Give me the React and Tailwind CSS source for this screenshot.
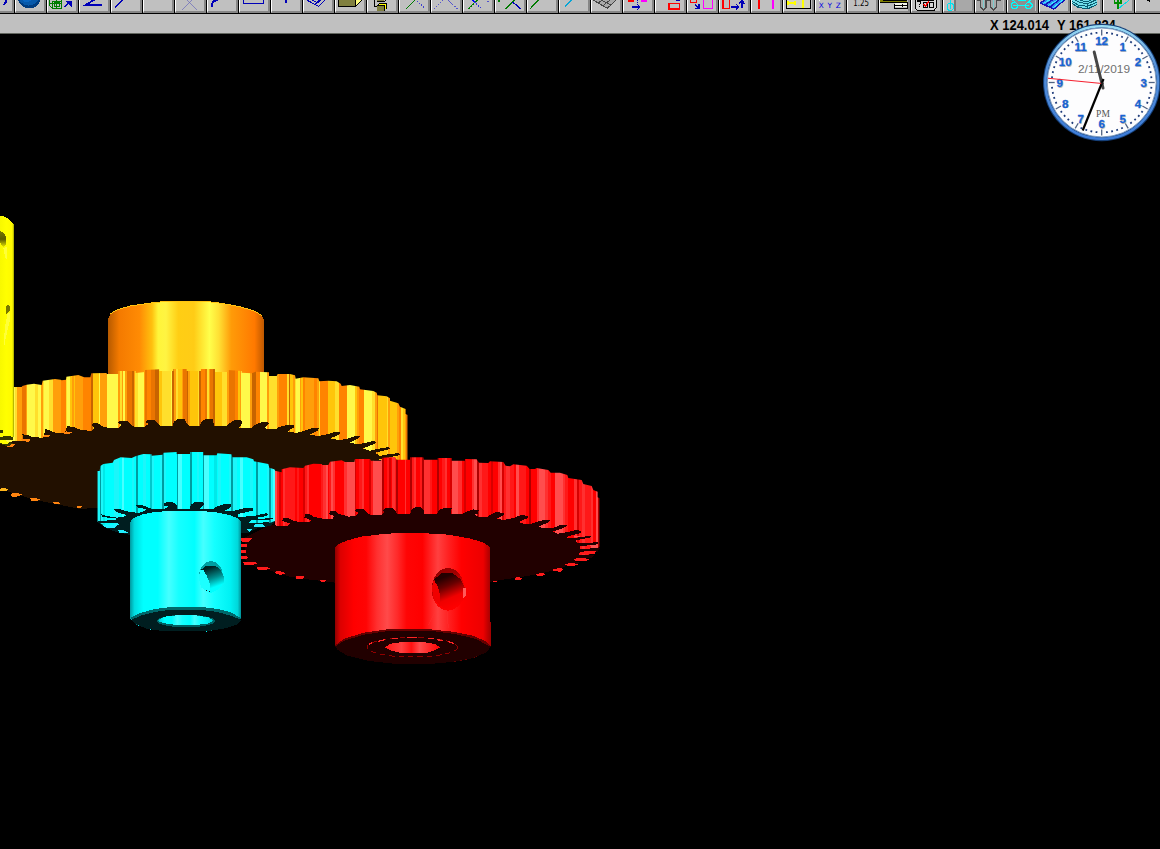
import React from 'react';

const NAVY = '#0000b8';
const p = (d, stroke = NAVY, w = 4, dash) => (
  <path d={d} fill="none" stroke={stroke} strokeWidth={w} strokeDasharray={dash} />
);
const r = (x, y, w, h, fill) => <rect x={x} y={y} width={w} height={h} fill={fill} />;

/* Every tool icon lives on a 96 x 39 grid: three units to a pixel. */
const icons = [
  <>
    <circle cx="46" cy="-10" r="35" fill="#003d80" />
    <circle cx="44" cy="-14" r="31" fill="#0759aa" />
    <circle cx="38" cy="-12" r="18" fill="#0a67c2" />
  </>,
  <>
    {p('M11 -3 V17 L19 25 H46 V-3 M19 25 V3 H46 M25 20 V8 H40 V20 Z M11 10 H46 M32 0 V25', '#007c00', 3)}
    {p('M56 21 L72 5')}
    <path d="M58 4 H77 V21 L70 15 Z" fill={NAVY} />
  </>,
  p('M72 14 H24 L54 -4', NAVY, 5),
  p('M15 23 L42 -4', NAVY, 5),
  null,
  p('M24 30 L66 -12 M26 -12 L68 30', '#6464bc', 2),
  p('M17 20 V11 L23 4 L36 0', NAVY, 5),
  p('M17 -4 V10 H76 V-4', NAVY, 4),
  p('M48 -3 V9', NAVY, 4),
  p('M14 0 L50 19 L72 -2 M28 -2 L44 7 L54 0 M40 12 L56 2', NAVY, 3),
  <>
    {r(12, -3, 53, 22, '#808040')}
    <path d="M65 19 V-3 H84 V2 Z" fill="#ffff80" />
    {p('M12 -3 V19 H65 L83 2 V-3 M65 19 V-3', '#000', 3)}
  </>,
  <>
    {p('M25 -3 V20 H34', '#000', 3)}
    {r(34, -3, 21, 8, '#808040')}
    {r(34, 14, 21, 18, '#808040')}
    {p('M34 5 H55 L60 0 M34 17 H54 V32 M34 17 L40 10 H61 V28', '#000', 3)}
    {p('M40 13 H57 V28', '#ffff00', 3)}
  </>,
  <>{p('M24 27 L54 -3', '#007c00')}{p('M57 3 L81 25', '#4040d0', 3, '5 3')}</>,
  <>{p('M12 27 L40 0', '#5656cc', 3, '5 3')}{p('M55 2 L83 27', '#5656cc', 3, '5 3')}</>,
  <>
    {p('M18 27 L48 -1', '#007c00', 4, '7 2')}
    {p('M30 0 L60 27', '#3434d8', 3, '5 3')}
    {p('M30 -2 L40 7', '#00f', 4)}
    {r(74, 2, 6, 4, '#5050d0')}
  </>,
  <>{p('M34 27 L64 -3', '#007c00')}{p('M56 6 L80 26')}{r(12, 0, 5, 5, '#007c00')}</>,
  p('M12 27 L40 -2', '#007c00'),
  p('M20 20 L44 -2', '#08a5d5'),
  <>
    <path d="M9 -1 L52 25 L78 -1 Z" fill="#a9a9a9" />
    {p('M9 0 L52 25 L78 0 M24 10 L36 0 M38 18 L60 0 M30 -2 L63 15', '#454545', 3)}
  </>,
  <>{r(18, 0, 18, 6, '#f00')}{r(57, 0, 19, 6, '#f0f')}{p('M46 0 V13', NAVY, 3, '3 3')}{p('M30 21 H54 M46 13 L54 21 L46 29')}</>,
  <>{p('M44 10 H76 V27 H44 Z', '#f00', 5)}{p('M68 0 L77 3', NAVY, 4)}</>,
  <>{p('M14 -3 V7 H31 V-3', '#f00')}{p('M27 13 L39 24 M39 13 V25 H28', NAVY, 4)}{p('M52 -3 V25 H79 V-3', '#f0f')}</>,
  <>{p('M15 -3 V25 H34 V-3', '#f00')}{p('M39 21 H62 M55 13 L63 21 L55 28 M72 24 V3 M63 12 L72 2 L80 12')}</>,
  <>{p('M27 -2 V27', '#f00', 5)}{p('M69 -2 V27', '#f0f', 5)}</>,
  <>
    {r(14, -2, 72, 26, '#d2d2c4')}
    {p('M14 -2 V24 H85 V-2', '#000', 3)}
    {p('M17 4 V15 M17 9 H39 M39 4 V15 M63 -2 V23', '#ff0', 5)}
  </>,
  <>
    <text x="14" y="24" fill="#0000e0" fontSize="22" textLength="66" className="font-['DejaVu_Sans']">X Y Z</text>
    {r(16, 0, 3, 3, '#fff')}
  </>,
  <text x="22" y="19" fill="#000" fontSize="26" textLength="47" lengthAdjust="spacingAndGlyphs" className="font-['DejaVu_Sans']">1.25</text>,
  <>
    {r(6, 0, 82, 6, '#808000')}
    {p('M6 6 H87 V24 H50 V11 M14 0 H86', '#000', 3)}
    {r(52, 9, 34, 12, '#f4f4e8')}
    {p('M52 15 H86 M74 12 V21', '#000', 3)}
  </>,
  <>
    {r(16, -3, 62, 32, '#d4d4d4')}
    {p('M16 -3 V24 L21 30 H73 L78 24 V-3', '#000', 3)}
    {p('M22 5 H31 V11 L27 15 M27 19 V22 M39 7 H52 V21 H39 Z M57 7 H70 V21 H57 Z M22 1 H72', '#000', 3)}
    {p('M41 12 L46 18 L57 4', '#f00', 4)}
  </>,
  <>{r(38, 0, 52, 33, '#a8a8a8')}{r(35, 0, 6, 33, '#777')}{p('M25 -3 V26 M16 14 L21 10 H29 L34 14 V25 L29 31 H20 L16 26 Z', '#00e5f2', 3)}</>,
  <>
    {r(4, 0, 84, 32, '#aaa')}
    {p('M8 0 H20 V22 L28 30 L36 22 V0 H50 V22 L59 30 L68 22 V0 H82', '#4b4b4b', 4)}
    {p('M28 0 V24 M59 0 V24', '#65dce0', 2)}
  </>,
  <>
    {r(4, 0, 84, 32, '#8e8e8e')}
    {p('M15 14 L21 8 H29 L35 14 V20 L29 26 H21 L15 20 Z M58 14 L64 8 H72 L78 14 V20 L72 26 H64 L58 20 Z M22 17 H70 M28 7 L16 -3 M64 8 L78 -3 M36 1 H60', '#0ff', 3)}
  </>,
  <>
    <path d="M6 9 L26 -3 H82 L48 28 Z" fill="#3487ee" />
    {p('M6 9 L48 27 L82 -2 M8 8 L26 -3 M22 14 L48 -3 M36 22 L65 -3', '#1414b8', 4)}
    {p('M16 10 L38 -2 M30 17 L58 0 M46 23 L74 0', '#32e9ff', 3)}
  </>,
  <>
    <path d="M5 -2 V9 L24 22 L52 27 L80 13 V-2 Z" fill="#72dfea" />
    {p('M5 3 L24 15 L52 19 L80 7 M5 9 L24 22 L52 27 L80 14 M12 -2 L30 8 L54 11 L77 0 M24 -2 L38 3 L58 3 L68 -2 M24 15 V22 M52 12 V27', '#0b5c70', 3)}
  </>,
  <>{p('M50 25 L83 -1', '#00dde7', 3)}{p('M37 -2 V8 H57 V-2 M48 -2 V27', '#008e00', 5)}</>,
  p('M38 0 H46 V5', '#000', 3),
];

function ToolButton({ children }) {
  return (
    <div className="flex h-[13px] w-8 shrink-0 overflow-hidden border-l border-black bg-[#c0c0c0]">
      <div className="h-full w-full overflow-hidden border-b-2 border-l border-r-2 border-b-[#868686] border-l-white border-r-[#868686]">
        <svg viewBox="6 0 84 33" width="28" height="11" className="block max-w-none" shapeRendering="crispEdges">{children}</svg>
      </div>
    </div>
  );
}

const gold = { f: '#c86400', o: '#ea7500', a: '#ff8400', b: '#ff9f0a', c: '#ffc50a', d: '#ffdf2c', e: '#fff94a' };
const reds = { f: '#b00000', o: '#d80000', a: '#ff0000', b: '#ff1818', c: '#ff3030', e: '#ff4d4d' };
const cyans = { f: '#009ca0', o: '#00c8cc', a: '#00ffff', b: '#00e9e9', c: '#1cf6fa', e: '#48ffff' };

function Stripes({ data, palette, bottom }) {
  const items = data.trim().split(/\s+/).map((s) => [parseInt(s, 10), s.slice(-1)]);
  return items.slice(0, -1).map(([x, k], i) => (
    <rect key={x} x={x} y="0" width={items[i + 1][0] - x} height={bottom} fill={palette[k]} />
  ));
}

const goldStripes = `-270e -225d -220b -204o -192b -189e -165d -156e -147b -141d -138e -122d -112b -99b -87a -72d -68e -60c -55b -48c -45b -22a 3f 8c 28e 30b 50e 84b 90d 96b 100e 106b 112o 125f 131b 136d 145e 162b 166o 172a 184o 194f 208c 215d 242e 247f 251b 258d 263c 276b 280o 291f 295b 301c 323d 328f 333a 345o 352d 358b 361o 368f 375c 397d 411b 417o 423o 434a 443c 449b 454e 481b 486f 497a 510e 531b 537d 560b 568a 590d 596f 599c 608b 614d 618e 630b 634c 638a 645b 672a 681b 686d 690a 715c 735d 748a 771e 795c 801b 808a 822e 846d 854b 860o 865c 890d 894b 900c 921b 928a 933d 939c 944b 948o 951a 954a`;
const redStripes = `120e 125b 132o 139a 145c 150b 181a 187b 193a 205o 210b 217c 221a 258b 263c 272e 278a 283b 288e 295c 300a 328c 337e 359o 364a 372b 382c 388a 402o 408b 413e 440f 447a 456b 461o 467a 472c 480b 484f 489a 510c 514a 526f 532b 538c 543a 554b 560f 567c 585b 590a 606f 611a 622b 629c 636a 646o 650e 670c 682a 688o 694a 710c 718e 725f 731c 741b 758a 768o 773a 789c 795e 801o 808b 812c 825b 836a 844e 852b 872a 883f 888a 905c 912e 930c 938b 949a 960e 983c 990b 999a 1017c 1025o 1032b 1041c 1049b 1068c 1075a 1082e 1089f 1095a`;
const cyanStripes = `52c 60f 64c 69b 74a 98a 103c 116a 126e 131a 155c 163a 169f 173a 190c 198a 211o 215c 223a 240c 247f 252c 258a 282a 291f 295e 306a 326a 330f 336a 350c 356a 369f 373e 388a 402b 412a 415c 422a 435a 448c 454f 459c 472a 480e 490a 509c 518a 528f 533c 540a 560c 567f 573c 579e 586a`;

function GoldGear() {
  return (
    <g transform="translate(90 290) scale(.333333)">
      <defs>
        <linearGradient id="goldHub">
          <stop offset="0" stopColor="#b85b00" /><stop offset=".07" stopColor="#f47a00" /><stop offset=".2" stopColor="#ff8b04" />
          <stop offset=".28" stopColor="#ffc00e" /><stop offset=".32" stopColor="#fff53a" /><stop offset=".37" stopColor="#fff442" />
          <stop offset=".45" stopColor="#ffce14" /><stop offset=".55" stopColor="#ffcc16" /><stop offset=".65" stopColor="#ffff4b" />
          <stop offset=".71" stopColor="#ffe034" /><stop offset=".79" stopColor="#ff9b08" /><stop offset=".94" stopColor="#ff7900" /><stop offset="1" stopColor="#bd5800" />
        </linearGradient>
        <clipPath id="goldClip">
          <path d="M-228 290 V291 H-205 L-203 288 L-190 284 L-168 281 L-145 285 L-142 272 L-105 267 L-88 269 L-85 271 L-72 269 L-71 260 L-35 255 L-17 262 H1 L4 250 L50 249 V252 H85 V243 H137 V249 L165 246 V240 L208 238 V243 H250 V237 H290 V243 H333 V237 H375 V246 H413 V240 L455 243 V248 L485 250 L497 245 L537 247 V258 H560 L563 252 H600 L615 256 L617 266 L640 262 L685 265 L688 274 L715 272 L740 274 L752 281 L755 288 L780 285 L808 290 L810 298 L850 303 L860 308 L862 316 L890 319 L900 325 V332 L925 340 L930 350 L947 357 V372 L953 375 V510 H850 V540 H-270 V290 Z" />
        </clipPath>
      </defs>
      <path d="M55 255 V85 L63 70 L80 60 L120 48 L190 38 L232 33 H342 L382 38 L445 49 L493 63 L515 76 L522 88 V255 Z" fill="url(#goldHub)" />
      <path d="M60 72 L80 60 L120 48 L190 38 L232 34 H342 L382 38 L445 49 L493 63 L515 76" fill="none" stroke="#ffc410" strokeWidth="3" />
      <g clipPath="url(#goldClip)"><Stripes data={goldStripes} palette={gold} bottom="550" /></g>
      <path
        fill="#221000"
        d="M-270 458 L-240 455 L-200 452 L-203 433 L-188 435 L-170 442 L-140 443 L-134 417 L-120 422 L-98 430 L-76 430 L-68 408 L-45 412 L-28 420 L-12 421 L4 423 L13 414 L5 406 L9 399 L28 401 L33 408 L60 415 L88 413 L96 405 L84 399 L88 393 H112 L125 405 L133 411 H162 L177 402 L168 397 L172 390 H193 L205 400 L212 408 H247 L252 395 L264 387 H283 L291 402 L299 408 H328 L335 394 L347 387 H368 L373 408 H408 L415 402 L432 391 H453 L457 398 L447 414 L485 415 L493 405 L513 397 L533 396 L537 402 L523 413 L535 418 H560 L567 411 L593 405 H611 L614 411 L592 424 L620 429 L643 422 L668 414 H687 L684 421 L660 434 L682 438 L705 435 L733 426 H752 L748 433 L722 445 L750 451 L775 445 L795 438 H810 L805 446 L779 458 L802 463 L824 459 L850 453 L860 457 L850 463 L818 475 L840 482 L868 476 L897 471 L900 477 L855 488 L870 498 L904 491 L928 490 L930 495 L890 504 L850 512 V600 H50 V655 H0 L-30 657 L-60 651 L-100 643 L-145 634 L-180 625 L-225 611 L-270 598 Z"
      />
      <g fill="#ff8410">
        <path d="M-270 596 L-255 594 L-245 600 L-255 604 H-270 Z" fill="#ffb51a" />
        <path d="M-237 613 L-230 609 L-214 610 L-201 614 L-221 620 H-235 Z" />
        <path d="M-180 624 H-163 L-149 628 L-159 633 H-175 Z" />
        <path d="M-114 636 L-93 637 L-89 642 H-107 Z" /><path d="M-39 648 L-24 649 L-29 655 H-38 Z" />
        <path d="M-239 462 L-223 463 L-233 470 H-248 Z" /><path d="M-202 446 L-177 449 L-185 456 L-210 450 Z" />
        <path d="M-136 434 L-118 437 L-128 441 H-142 Z" /><path d="M-72 424 L-53 427 L-64 432 H-80 Z" />
      </g>
    </g>
  );
}

function YellowShaft() {
  return (
    <g transform="translate(0 205) scale(.333333)">
      <defs>
        <linearGradient id="shaft"><stop offset="0" stopColor="#f8f800" /><stop offset=".45" stopColor="#ffff00" /><stop offset=".86" stopColor="#fff900" /><stop offset=".94" stopColor="#d8d800" /><stop offset="1" stopColor="#8a8a00" /></linearGradient>
        <linearGradient id="shaftHole" x2="0" y2="1"><stop offset="0" stopColor="#777700" /><stop offset=".5" stopColor="#5a5a00" /><stop offset="1" stopColor="#eaea00" /></linearGradient>
      </defs>
      <path d="M0 33 L12 34 L28 43 L42 58 V696 H0 Z" fill="url(#shaft)" />
      <path d="M0 78 L10 82 L18 96 V120 L10 127 L0 113 Z" fill="url(#shaftHole)" />
      <path d="M22 125 V167 L15 156 L10 130 Z M23 325 L29 323 V350 L18 395 L12 430 L14 370 Z" fill="#ffff38" />
      <path d="M18 306 L22 300 L30 303 V318 L24 322 L18 327 Z" fill="#777700" />
      <path d="M0 675 H8 V683 H0 Z M0 697 L20 692 L39 696 V705 H0 Z M20 709 L40 715 L25 724 L0 717 V710 Z" fill="#383800" />
      <path d="M0 706 L18 706 L28 714 L14 718 L0 713 Z" fill="#ffff00" />
    </g>
  );
}

function RedGear() {
  return (
    <g transform="translate(235 445) scale(.333333)">
      <defs>
        <linearGradient id="redHub"><stop offset="0" stopColor="#8f0000" /><stop offset=".035" stopColor="#dc0000" /><stop offset=".12" stopColor="#ff0000" /><stop offset=".2" stopColor="#ff0404" /><stop offset=".27" stopColor="#ff3030" /><stop offset=".335" stopColor="#ff4a4a" /><stop offset=".4" stopColor="#ff2a2a" /><stop offset=".46" stopColor="#ff0505" /><stop offset=".56" stopColor="#ff0000" /><stop offset=".66" stopColor="#ff4040" /><stop offset=".73" stopColor="#ff2020" /><stop offset=".81" stopColor="#ff0000" /><stop offset=".95" stopColor="#ed0000" /><stop offset="1" stopColor="#a00000" /></linearGradient>
        <linearGradient id="redHole" x1=".1" y1="0" x2=".45" y2="1"><stop offset=".16" stopColor="#240000" /><stop offset=".4" stopColor="#680000" /><stop offset=".72" stopColor="#f00000" /><stop offset="1" stopColor="#ff0000" /></linearGradient>
        <linearGradient id="redRim" x1="0" y1="0" x2=".4" y2="1"><stop offset="0" stopColor="#8e0000" /><stop offset=".35" stopColor="#a00000" /><stop offset=".75" stopColor="#ff0000" /></linearGradient>
        <linearGradient id="redBore"><stop offset="0" stopColor="#ff1515" /><stop offset=".3" stopColor="#ff4040" /><stop offset=".48" stopColor="#ff1111" /><stop offset=".63" stopColor="#ff4c4c" /><stop offset="1" stopColor="#ff0000" /></linearGradient>
        <clipPath id="redClip"><path d="M120 77 L140 82 V73 L165 67 L205 69 L210 62 L235 56 L260 57 L262 60 H280 L285 50 L320 46 L330 51 H358 L360 42 H405 L408 47 H438 L442 38 L480 36 L485 44 H525 V37 H565 L567 44 H608 V39 H650 V47 H690 V42 L725 43 L732 53 L760 54 L765 49 L805 51 L812 62 L825 64 L835 58 L875 62 L884 72 H900 L905 69 L940 75 L947 83 H975 L997 90 L1000 99 L1040 105 L1045 117 L1070 123 L1075 135 L1088 140 V157 L1094 160 V305 L1060 330 H120 Z" /></clipPath>
      </defs>
      <g clipPath="url(#redClip)"><Stripes data={redStripes} palette={reds} bottom="340" /></g>
      <path
        fill="#210000"
        d="M120 232 L110 240 L135 243 L158 242 L165 235 L142 228 L143 220 L158 219 L170 225 L194 232 H222 L229 226 L208 218 L210 208 H225 L235 215 L262 221 L292 222 L298 214 L283 207 L285 198 H303 L310 206 L342 215 L362 212 L370 204 L360 198 L366 192 H384 L398 206 L410 210 H440 L449 202 L444 196 L450 189 H474 L484 202 L487 207 H525 L530 194 L541 186 H556 L567 198 V207 H605 L612 195 L624 190 H650 L647 207 H683 L690 202 L715 193 L731 196 L729 205 L718 210 L733 216 H755 L780 202 L808 203 L805 212 L785 220 L805 225 L835 219 L860 210 L880 213 L877 220 L850 231 L866 236 L887 237 L928 224 L945 226 L940 233 L910 244 L926 250 L955 248 L980 239 L998 239 L992 246 L954 260 L968 266 L995 262 L1023 255 L1040 258 L1035 265 L1005 272 L990 280 L1020 279 L1065 272 L1072 276 L1020 287 L1028 294 H1060 L1088 291 V298 L1035 304 V311 L1095 310 L1088 320 L1033 325 V331 L1080 330 L1068 339 L1020 345 V351 L1034 350 L1027 358 L994 363 L970 373 L920 385 L870 394 L805 404 L750 413 H300 L260 408 L210 402 L165 395 L120 381 L62 365 L30 345 V278 L60 262 L90 247 Z"
      />
      <g fill="#ff1b1b">
        <path d="M18 280 H50 L43 290 H20 Z M18 296 H35 V305 H18 Z M18 315 H33 V323 H18 Z M18 333 L43 335 L36 342 H18 Z M23 350 H57 L69 355 L48 361 H30 Z M66 366 H94 L105 370 L91 375 H68 Z M120 380 L134 378 L153 384 L141 389 L123 388 Z M182 393 L208 394 L203 402 H184 Z M255 404 L274 406 L267 411 H257 Z M773 407 H785 V412 H773 Z M838 399 L850 396 L861 400 L857 405 H841 Z M900 387 L926 384 L930 389 L919 393 L905 392 Z M950 375 L973 368 L985 372 L977 380 L958 379 Z M990 358 L1010 353 L1030 358 L1015 364 H1000 Z M1016 344 L1030 338 L1065 342 L1052 348 H1020 Z M1033 322 L1051 319 L1085 318 L1077 328 H1041 Z" />
        <path d="M1064 300 H1090 V306 L1070 310 Z M1015 273 H1035 V277 H1020 Z" fill="#ff5252" />
      </g>
      <path d="M300 310 L306 300 L334 287 L378 275 L445 267 L490 264 H555 L640 269 L707 281 L746 293 L765 307 V530 L768 532 V605 L740 625 H330 L300 600 Z" fill="url(#redHub)" />
      <path d="M300 601 L330 580 L388 563 L458 553 H587 L660 561 L713 572 L755 590 L768 605 L755 621 L720 638 L670 649 L595 656 H490 L405 648 L335 631 L308 614 Z" fill="#650000" />
      <path d="M301 604 L330 586 L388 569 L459 558 H590 L660 567 L720 581 L755 599 L768 605 L753 623 L710 640 L650 651 L583 657 H483 L402 648 L335 631 L307 614 Z" fill="#210000" />
      <ellipse cx="532" cy="607" rx="136" ry="29" fill="none" stroke="#8f0000" strokeWidth="3" strokeDasharray="16 12" />
      <path d="M402 598 L412 592 M430 589 L450 584 M471 581 H490 M515 577 H546 M579 580 H597 M607 584 L625 587 M640 590 L656 595" stroke="#ff2424" strokeWidth="4" />
      <path d="M450 607 L467 596 L502 591 L560 590 L600 597 L615 607 L600 616 L575 624 H500 L469 617 Z" fill="url(#redBore)" />
      <ellipse cx="639" cy="433" rx="49" ry="64" fill="url(#redRim)" />
      <path d="M598 402 L620 385 H652 L677 402 L690 430 L688 460 L670 485 L640 497 L614 481 V456 Z" fill="url(#redHole)" />
      <path d="M596 405 L590 430 L596 458 L614 483 L615 450 L609 425 Z" fill="#f00000" />
      <path d="M684 431 L692 428 V453 L684 461 Z" fill="#ff5a5a" />
      <path d="M605 490 L580 540 M636 500 L640 550" stroke="#ff3838" strokeWidth="2" opacity=".4" />
    </g>
  );
}

function CyanGear() {
  return (
    <g transform="translate(80 440) scale(.333333)">
      <defs>
        <linearGradient id="cyanHub"><stop offset="0" stopColor="#009aa0" /><stop offset=".04" stopColor="#00dce0" /><stop offset=".12" stopColor="#00ffff" /><stop offset=".25" stopColor="#0ff" /><stop offset=".35" stopColor="#46ffff" /><stop offset=".44" stopColor="#16ffff" /><stop offset=".58" stopColor="#0ff" /><stop offset=".66" stopColor="#46ffff" /><stop offset=".76" stopColor="#14ffff" /><stop offset=".9" stopColor="#00f2f4" /><stop offset=".97" stopColor="#00d7da" /><stop offset="1" stopColor="#008f95" /></linearGradient>
        <linearGradient id="cyanHole" x1=".2" y1="0" x2=".5" y2="1"><stop offset=".12" stopColor="#002222" /><stop offset=".5" stopColor="#008c8c" /><stop offset=".82" stopColor="#00ffff" /></linearGradient>
        <linearGradient id="cyanRim" x2="0" y2="1"><stop offset="0" stopColor="#009b9e" /><stop offset=".35" stopColor="#00a8aa" /><stop offset=".7" stopColor="#0ff" /></linearGradient>
        <clipPath id="cyanClip"><path d="M52 245 V93 H59 L61 78 L70 72 L98 68 L102 60 L122 52 L155 54 L168 48 L190 42 L215 43 V47 L248 44 L250 38 L290 36 V42 H330 V36 H370 V46 H410 L412 40 L455 43 L457 52 L500 52 L520 58 L522 64 L565 72 L568 83 L583 88 L586 93 V242 L555 255 H70 Z" /></clipPath>
      </defs>
      <path d="M52 244 H586 L570 258 L530 266 L502 280 H150 L120 280 L75 263 Z" fill="#001e20" />
      <g clipPath="url(#cyanClip)"><Stripes data={cyanStripes} palette={cyans} bottom="260" /></g>
      <path d="M62 222 L75 227 L110 233 L135 229 L140 225 L108 216 L103 208 L117 207 L145 215 L175 219 L195 213 L200 208 L171 202 L169 195 L185 195 L220 208 H248 L267 200 L250 196 L252 189 L263 186 H278 L291 196 L292 207 H328 L333 194 L344 186 H370 L371 193 L360 207 L398 207 L415 198 L430 193 H453 L454 201 L432 214 L455 214 L490 205 H520 L518 212 L475 222 L475 231 L520 228 L556 220 L566 221 L560 228 L520 235 L545 236 L583 234 L569 239 H515 L505 250 L560 247 L583 249 L574 254 L520 263 L500 276 H483 V285 H150 L112 276 L122 263 L112 248 H55 V242 L107 241 L112 236 L68 231 Z" fill="#001e20" />
      <path d="M65 254 H113 L105 263 H78 Z M112 269 L132 271 L145 278 L120 280 Z M526 253 H548 L556 260 H521 Z M499 268 H518 L510 276 Z" fill="#20efff" />
      <path d="M150 247 L158 235 L185 224 L224 216 L282 212 H353 L409 217 L452 226 L476 236 L483 246 V537 L450 558 H177 L150 535 Z" fill="url(#cyanHub)" />
      <path d="M152 533 L180 519 L225 507 L273 501 H365 L414 507 L456 518 L483 535 L474 552 L440 564 L380 574 H260 L205 567 L165 552 Z" fill="#00686a" />
      <path d="M153 540 L185 526 L235 514 L278 509 H360 L412 516 L458 529 L483 540 L470 554 L436 565 L378 574 H255 L200 566 L166 552 Z" fill="#001e20" />
      <ellipse cx="318" cy="543" rx="87" ry="19" fill="#005f61" />
      <path d="M234 540 L255 530 L290 526 H347 L385 532 L400 542 L382 551 L339 556 H302 L263 552 L236 545 Z" fill="url(#cyanHub)" />
      <ellipse cx="393" cy="410" rx="36" ry="46" fill="url(#cyanRim)" />
      <path d="M363 389 L380 377 H405 L421 388 L431 408 V429 L415 449 L391 460 L372 442 V410 Z" fill="url(#cyanHole)" />
      <path d="M361 391 L356 413 L364 443 L389 458 V430 L379 405 L369 389 Z" fill="#1cffff" />
      <path d="M378 450 H381 V454 H378 Z M387 452 H390 V456 H387 Z" fill="#002020" />
      <path d="M210 567 H213 V570 H210 Z M378 573 H381 V576 H378 Z" fill="#0ff" />
    </g>
  );
}

const tick = (i, inner, outer) => {
  const a = (i * Math.PI) / 30;
  return `M${58.7 + inner * Math.sin(a)} ${59.5 - inner * Math.cos(a)} L${58.7 + outer * Math.sin(a)} ${59.5 - outer * Math.cos(a)}`;
};

function Clock() {
  return (
    <svg width="118" height="120" viewBox="0 0 118 120" className="absolute left-[1043px] top-[23px] font-['Liberation_Sans',sans-serif]">
      <defs>
        <linearGradient id="bezel" x2="0" y2="1"><stop offset="0" stopColor="#9bddf5" /><stop offset=".35" stopColor="#5590d8" /><stop offset="1" stopColor="#3d7cd8" /></linearGradient>
      </defs>
      <circle cx="58.7" cy="59.5" r="58.8" fill="#153f78" />
      <circle cx="58.7" cy="59.5" r="56.3" fill="none" stroke="url(#bezel)" strokeWidth="2.6" />
      <circle cx="58.7" cy="59.5" r="54.5" fill="#fdfdfe" stroke="#7d9cc4" strokeWidth="1" />
      {Array.from({ length: 60 }, (_, i) => (
        <path key={i} d={i % 5 ? tick(i, 49, 50.8) : tick(i, 47, 53)} stroke={i % 5 ? '#1b3978' : '#506383'} strokeWidth={i % 5 ? 1.8 : 1.3} />
      ))}
      {Array.from({ length: 12 }, (_, i) => {
        const a = ((i + 1) * Math.PI) / 6;
        const x = 58.6 + 42 * Math.sin(a);
        const y = 63.8 - 41.5 * Math.cos(a);
        return (
          <g key={i} fontSize="11.5" fontWeight="700" textAnchor="middle">
            <text x={x + 0.8} y={y + 0.8} fill="#c7c0b4">{i + 1}</text>
            <text x={x} y={y} fill="#1763d5" stroke="#1763d5" strokeWidth=".3">{i + 1}</text>
          </g>
        );
      })}
      <text x="35" y="49.5" fontSize="11.6" fill="#707070" textLength="52" lengthAdjust="spacingAndGlyphs">2/11/2019</text>
      <text x="53" y="94" fontSize="9.5" fill="#555" textLength="14" className="font-['Liberation_Serif',serif]">PM</text>
      <path d="M60 65 L51.2 29" stroke="#454545" strokeWidth="3" strokeLinecap="round" />
      <path d="M60.5 56 L39.7 107.5" stroke="#000" strokeWidth="2.2" />
      <path d="M5 55.3 L59 60.5" stroke="#f5202f" strokeWidth="1.1" />
      <circle cx="59.3" cy="60.5" r="1.3" fill="#222" />
    </svg>
  );
}

export default function App() {
  return (
    <div className="relative flex h-[849px] w-[1160px] flex-col overflow-hidden bg-black">
      <div className="flex h-[14px] shrink-0 overflow-hidden border-b border-black bg-[#c0c0c0]">
        <div className="h-[13px] w-[14px] shrink-0 overflow-hidden border-b-2 border-r-2 border-[#868686] bg-[#c0c0c0]">
          <svg width="12" height="11" viewBox="0 0 36 33" shapeRendering="crispEdges" className="block">{p('M11 14 L18 6 V-2', NAVY, 5)}</svg>
        </div>
        {icons.map((icon, i) => <ToolButton key={i}>{icon}</ToolButton>)}
      </div>
      <div className="flex h-5 shrink-0 items-center border-b border-[#62665f] bg-[#c0c0c0] pl-[990px] pt-[3px] font-['Liberation_Sans',sans-serif] text-[14px] font-bold leading-none text-black">
        <span className="w-[67px] shrink-0 origin-left scale-x-[.925] whitespace-pre">X 124.014</span>
        <span className="shrink-0 origin-left scale-x-[.925] whitespace-pre">Y 161.824</span>
      </div>
      <svg viewBox="0 0 1160 849" width="1160" height="849" shapeRendering="crispEdges" className="-mt-[34px] block shrink-0">
        <GoldGear />
        <YellowShaft />
        <RedGear />
        <CyanGear />
      </svg>
      <Clock />
    </div>
  );
}
